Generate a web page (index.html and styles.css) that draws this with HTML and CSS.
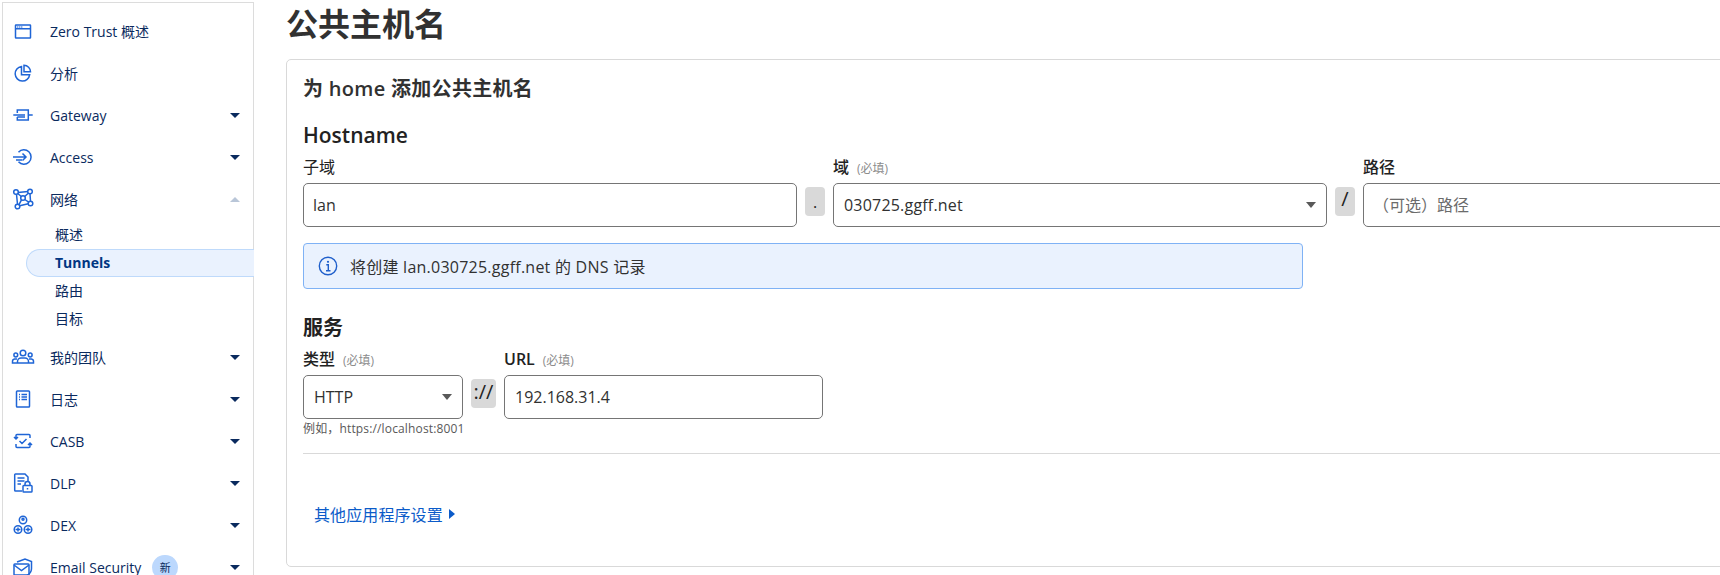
FILE: index.html
```html
<!DOCTYPE html>
<html lang="zh-CN">
<head>
<meta charset="utf-8">
<title>公共主机名</title>
<link rel="stylesheet" href="styles.css">
</head>
<body>
<div class="page">
  <aside class="sidebar">
    <nav class="nav">
      <a class="item"><svg class="icon" viewBox="0 0 24 24"><rect x="4.500" y="6" width="15" height="13" rx="0.500"/><path d="M4.500 9.800h15M6.300 8h1M8.300 8h1M10.300 8h1"/></svg><span>Zero Trust 概述</span></a>
      <a class="item"><svg class="icon" viewBox="0 0 24 24"><path d="M10.500 5.500a7.300 7.300 0 1 0 8.200 8.200h-8.200z"/><path d="M13 4.300a6.500 6.500 0 0 1 6.500 6.500H13z"/></svg><span>分析</span></a>
      <a class="item"><svg class="icon" viewBox="0 0 24 24"><path d="M2.300 12H14M6.300 10V7h11v10h-11v-3M17.300 12h4.400M6.300 14H14"/></svg><span>Gateway</span><i class="caret"></i></a>
      <a class="item"><svg class="icon" viewBox="0 0 24 24"><path d="M2 12h13M11.500 8.500L15 12l-3.500 3.500M5 15h6"/><path d="M7.500 7.200a7.200 7.200 0 1 1 0 9.600"/></svg><span>Access</span><i class="caret"></i></a>
      <a class="item"><svg class="icon" viewBox="0 0 24 24"><circle cx="5" cy="5" r="2.300"/><circle cx="19" cy="4.500" r="2.300"/><circle cx="6.500" cy="19.500" r="2.300"/><circle cx="19.500" cy="16.500" r="2.300"/><circle cx="12" cy="11" r="2.300"/><path d="M7 5.500l10-1M5.500 7.300l1 10M19 6.800l.5 7.400M8.700 18.800l8.500-2M6.700 6.500l3.600 3M17.300 6.200l-3.600 3.300M13.800 12.500l3.900 2.600M10.500 12.800l-2.500 4.900"/></svg><span>网络</span><i class="caret up"></i></a>
      <div class="sub">
        <a class="sub-item">概述</a>
        <a class="sub-item active">Tunnels</a>
        <a class="sub-item">路由</a>
        <a class="sub-item">目标</a>
      </div>
      <a class="item"><svg class="icon" viewBox="0 0 24 24"><circle cx="12" cy="8" r="2.800"/><circle cx="4.800" cy="10" r="1.900"/><circle cx="19.200" cy="10" r="1.900"/><path d="M6.500 18v-1.500a3.500 3.500 0 0 1 3.500-3.500h4a3.500 3.500 0 0 1 3.500 3.500V18zM6 14H3.500A2.500 2.500 0 0 0 1.500 16.500V18h5M18 14h2.500a2.500 2.500 0 0 1 2 2.500V18h-5"/></svg><span>我的团队</span><i class="caret"></i></a>
      <a class="item"><svg class="icon" viewBox="0 0 24 24"><rect x="5.500" y="4" width="13" height="16" rx="0.800"/><path d="M8 7.500h1M10.500 7.500h5.500M8 10h1M10.500 10h5.500M8 12.500h1M10.500 12.500h5.500"/></svg><span>日志</span><i class="caret"></i></a>
      <a class="item"><svg class="icon" viewBox="0 0 24 24"><path d="M5 10V6.500a1 1 0 0 1 1-1h12a1 1 0 0 1 1 1V9M19 14v3.500a1 1 0 0 1-1 1H6a1 1 0 0 1-1-1V15M3 8l2 2 2-2M17 16l2-2 2 2M8.500 12l2.500 2.500 4.500-4.500"/></svg><span>CASB</span><i class="caret"></i></a>
      <a class="item"><svg class="icon" viewBox="0 0 24 24"><path d="M11 20H4.500a.8.800 0 0 1-.8-.8V3.800a.8.800 0 0 1 .8-.8H14l3 3v4"/><path d="M6.500 7h7M6.500 10h7M6.500 13h3.500"/><rect x="12" y="14.500" width="9" height="6.500" rx="0.800"/><path d="M14 14.500v-1.500a2.500 2.500 0 0 1 5 0v1.500M16.500 17v1.500"/></svg><span>DLP</span><i class="caret"></i></a>
      <a class="item"><svg class="icon" viewBox="0 0 24 24"><circle cx="12" cy="7" r="3.700"/><circle cx="7" cy="16.500" r="3.800"/><circle cx="17" cy="16.500" r="3.800"/><circle cx="12" cy="6.300" r="1"/><path d="M4.500 16.500h5M14.500 16.500h5M7 14.500v4M17 14.500v4"/></svg><span>DEX</span><i class="caret"></i></a>
      <a class="item"><svg class="icon" viewBox="0 0 24 24"><path d="M6 7l8-3 6.500 2.500v7c0 4-3 6.500-6.500 8"/><rect x="3" y="9" width="15" height="11" rx="0.800"/><path d="M3 10l7.500 5.500L18 10"/></svg><span>Email Security</span><b class="badge">新</b><i class="caret"></i></a>
    </nav>
  </aside>

  <main class="main">
    <h1 class="title">公共主机名</h1>
    <section class="card">
      <h2 class="card-title">为 home 添加公共主机名</h2>

      <h3 class="group-title first">Hostname</h3>
      <div class="row">
        <div class="field wide">
          <div class="label plain">子域</div>
          <div class="control tight">lan</div>
        </div>
        <div class="sep">.</div>
        <div class="field wide">
          <div class="label">域<small>(必填)</small></div>
          <div class="control select domain">030725.ggff.net<i class="arrow"></i></div>
        </div>
        <div class="sep slash">/</div>
        <div class="field wide">
          <div class="label">路径</div>
          <div class="control placeholder">（可选）路径</div>
        </div>
      </div>

      <div class="alert">
        <svg class="alert-icon" viewBox="0 0 20 20"><circle cx="10" cy="10" r="8.700"/><path d="M8.300 8.700H10.300V14.500M8 14.700h4.500"/><circle class="dot" cx="10" cy="5.800" r="1.100"/></svg>
        <span>将创建 lan.030725.ggff.net 的 DNS 记录</span>
      </div>

      <h3 class="group-title">服务</h3>
      <div class="row service">
        <div class="field type">
          <div class="label">类型<small>(必填)</small></div>
          <div class="control select">HTTP<i class="arrow"></i></div>
          <div class="help">例如，https://localhost:8001</div>
        </div>
        <div class="sep scheme">://</div>
        <div class="field url">
          <div class="label"><strong>URL</strong><small>(必填)</small></div>
          <div class="control">192.168.31.4</div>
        </div>
      </div>

      <hr class="rule">

      <a class="more">其他应用程序设置<i class="more-caret"></i></a>
    </section>
  </main>
</div>
</body>
</html>
```
FILE: styles.css
```css
* { box-sizing: border-box; }
html, body { margin: 0; height: 575px; overflow: hidden; background: #fff; }
body { font-family: "Open Sans", "Noto Sans CJK SC", sans-serif; color: #313131; }

.page { display: flex; height: 575px; overflow: hidden; }

.sidebar {
  flex: 0 0 252px;
  margin: 2px 0 0 2px;
  border: 1px solid #dcdcdc;
  border-width: 1px 1px 0 1px;
  padding-top: 7px;
  color: #0a2a5e;
  font-size: 14px;
}
.nav { display: flex; flex-direction: column; }
.item { display: flex; align-items: center; height: 42px; padding: 0 13px 0 8px; flex: none; }
.icon { width: 24px; height: 24px; margin-right: 15px; flex: none; fill: none; stroke: #1f65d6; stroke-width: 1.500; }
.caret { margin-left: auto; width: 0; height: 0; border: 5px solid transparent; border-top-color: #0a2a5e; border-bottom-width: 0; }
.caret.up { border-top-width: 0; border-bottom: 5px solid #b9c6d8; }
.badge { margin-left: 11px; width: 26px; height: 25px; border-radius: 13px; background: #bcd8fd; font-size: 11px; font-weight: 400; line-height: 25px; text-align: center; }

.sub { display: flex; flex-direction: column; padding: 1px 0 3px; flex: none; }
.sub-item { display: block; height: 28px; line-height: 28px; margin-left: 23px; padding-left: 29px; }
.sub-item.active {
  margin-right: -1px;
  height: 28px;
  line-height: 26px;
  padding-left: 28px;
  background: #eaf2fe;
  border: 1px solid #bfdafb;
  border-right: 0;
  border-radius: 14px 0 0 14px;
  font-weight: 700;
  color: #003682;
}

.main { flex: 1 1 auto; min-width: 0; padding: 4px 0 0 32px; overflow: hidden; }
.title { margin: 0 0 15px; font-size: 32px; line-height: 40px; font-weight: 700; color: #313131; }

.card {
  width: 1600px;
  height: 508px;
  border: 1px solid #d9d9d9;
  border-radius: 5px;
  padding: 16px 16px 0;
}
.card-title { margin: 0; font-size: 20px; line-height: 26px; font-weight: 600; letter-spacing: .3px; color: #313131; }
.group-title { margin: 26px 0 0; font-size: 20px; line-height: 26px; font-weight: 700; color: #222; }
.group-title.first { margin-top: 20px; font-size: 21px; font-weight: 600; }

.row { display: flex; gap: 8px; margin-top: 9px; }
.row.service { margin-top: 8px; }
.row .sep { margin-top: 30px; }
.field { flex: none; }
.wide { width: 494px; }
.type { width: 160px; }
.url { width: 319px; }
.label { height: 20px; line-height: 20px; margin-bottom: 6px; font-size: 16px; font-weight: 500; color: #222; white-space: nowrap; }
.label.plain { font-weight: 400; }
.label strong { font-weight: 600; }
.label small { margin-left: 8px; font-size: 12px; font-weight: 400; color: #8c8c8c; }

.control {
  position: relative;
  height: 44px;
  line-height: 42px;
  border: 1px solid #757575;
  border-radius: 5px;
  padding: 0 10px;
  font-size: 16px;
  color: #313131;
  background: #fff;
}
.tight { padding-left: 9px; }
.domain { letter-spacing: .2px; }
.placeholder { color: #6b6b6b; padding-left: 9px; }
.arrow {
  position: absolute;
  right: 10px;
  top: 18px;
  width: 0;
  height: 0;
  border: 5px solid transparent;
  border-top: 6px solid #595959;
  border-bottom: 0;
}
.sep {
  flex: none;
  width: 20px;
  height: 29px;
  border-radius: 4px;
  background: #d9d9d9;
  text-align: center;
  font-size: 16px;
  line-height: 30px;
  color: #222;
}
.slash { line-height: 24px; font-size: 20px; font-weight: 400; }
.scheme { width: 25px; font-size: 20px; line-height: 25px; }

.help { margin-top: 2px; height: 16px; line-height: 16px; font-size: 12px; letter-spacing: .15px; color: #595959; white-space: nowrap; }

.alert {
  display: flex;
  align-items: center;
  width: 1000px;
  height: 46px;
  margin-top: 16px;
  padding-left: 14px;
  gap: 12px;
  background: #eaf2fe;
  border: 1px solid #7fb2f5;
  border-radius: 4px;
  font-size: 16px;
  letter-spacing: .24px;
  color: #313131;
}
.alert-icon { width: 20px; height: 20px; flex: none; fill: none; stroke: #1f5fcb; stroke-width: 1.400; }
.alert-icon .dot { fill: #1f5fcb; stroke: none; }

.rule { height: 1px; margin: 16px 0 0; border: 0; background: #d9d9d9; }

.more { display: flex; align-items: center; margin: 50px 0 0 11px; height: 20px; font-size: 16px; letter-spacing: .1px; color: #0b5bc9; }
.more-caret { margin-left: 6px; width: 0; height: 0; border: 5px solid transparent; border-left: 6px solid #0b5bc9; border-right: 0; }
```
